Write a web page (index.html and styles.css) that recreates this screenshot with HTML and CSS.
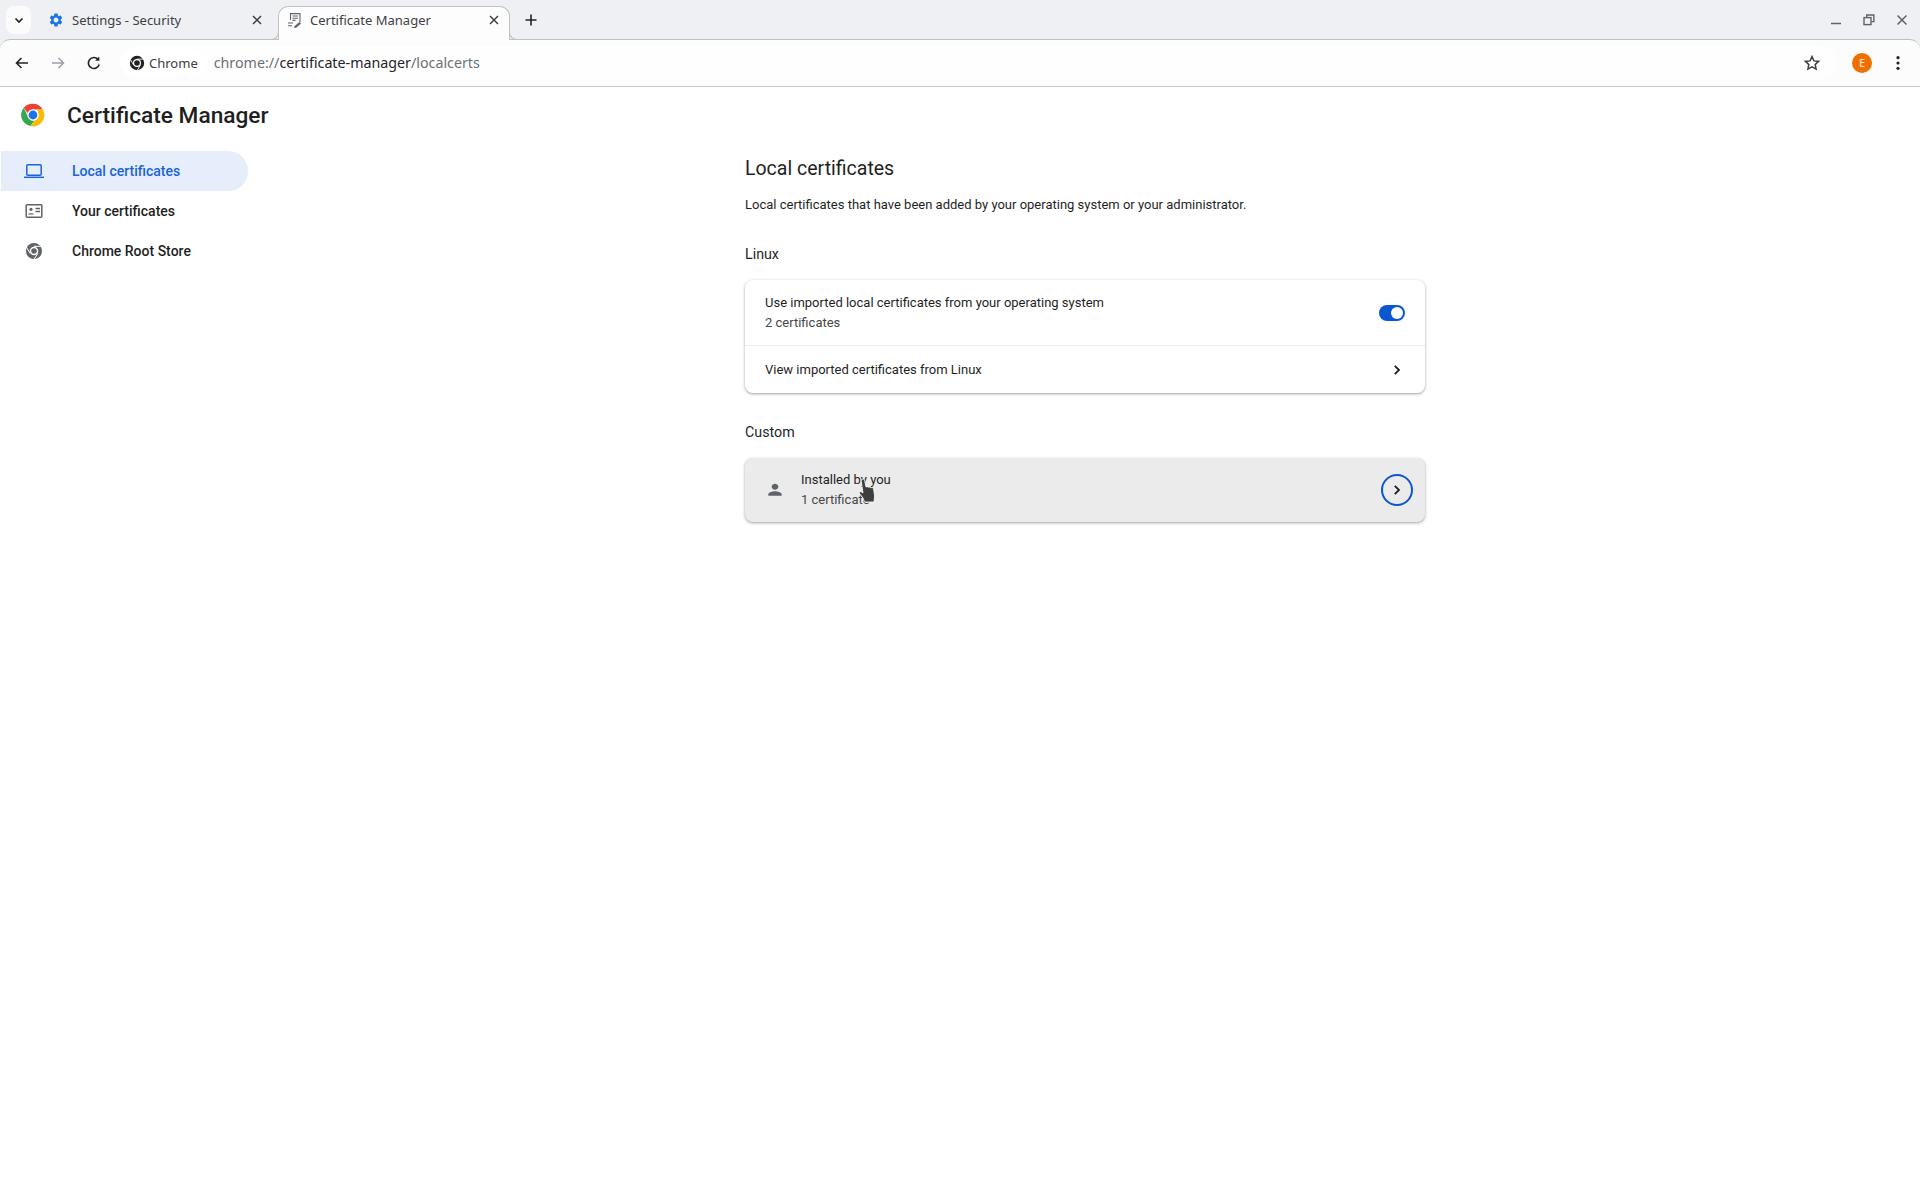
FILE: index.html
```html
<!DOCTYPE html>
<html lang="en">
<head>
<meta charset="utf-8">
<title>Certificate Manager</title>
<link rel="stylesheet" href="styles.css">
</head>
<body>
<div class="browser">
  <div class="tabstrip">
    <button class="tabsearch"><svg width="12" height="12" viewBox="0 0 12 12"><path d="M2.5 4.5 6 8l3.5-3.5" fill="none" stroke="#1f2328" stroke-width="1.7"/></svg></button>
    <div class="tab">
      <svg class="tabicon" width="16" height="16" viewBox="0 0 24 24"><path fill="#1a73e8" d="M19.14 12.94c.04-.3.06-.61.06-.94 0-.32-.02-.64-.07-.94l2.03-1.58c.18-.14.23-.41.12-.61l-1.92-3.32c-.12-.22-.37-.29-.59-.22l-2.39.96c-.5-.38-1.03-.7-1.62-.94l-.36-2.54c-.04-.24-.24-.41-.48-.41h-3.84c-.24 0-.43.17-.47.41l-.36 2.54c-.59.24-1.13.57-1.62.94l-2.39-.96c-.22-.08-.47 0-.59.22L2.74 8.87c-.12.21-.08.47.12.61l2.03 1.58c-.05.3-.09.63-.09.94s.02.64.07.94l-2.03 1.58c-.18.14-.23.41-.12.61l1.92 3.32c.12.22.37.29.59.22l2.39-.96c.5.38 1.03.7 1.62.94l.36 2.54c.05.24.24.41.48.41h3.84c.24 0 .44-.17.47-.41l.36-2.54c.59-.24 1.13-.56 1.62-.94l2.39.96c.22.08.47 0 .59-.22l1.92-3.32c.12-.22.07-.47-.12-.61l-2.01-1.58zM12 15.6c-1.98 0-3.6-1.62-3.6-3.6s1.62-3.6 3.6-3.6 3.6 1.62 3.6 3.6-1.62 3.6-3.6 3.6z"/></svg>
      <span class="tabtitle">Settings - Security</span>
      <svg class="tabclose" width="16" height="16" viewBox="0 0 16 16"><path d="m4 4 8 8M12 4l-8 8" stroke="#3c4043" stroke-width="1.5" fill="none"/></svg>
    </div>
    <div class="tab tab-active">
      <svg class="tabicon" width="16" height="16" viewBox="0 0 16 16" fill="none" stroke="#5f6368" stroke-width="1.1"><path d="M3.500 8V1.600h9.500v8.500"/><path d="M5.500 4h5.500M5.500 6.200h5.500M5.500 8.400h3"/><path d="M1 11h5M1 13.800h4"/><path d="m7.500 14.500 5-4.300 1.300 1.300-4.800 4H7.500z" fill="#5f6368" stroke-width=".6"/></svg>
      <span class="tabtitle">Certificate Manager</span>
      <svg class="tabclose" width="16" height="16" viewBox="0 0 16 16"><path d="m4 4 8 8M12 4l-8 8" stroke="#3c4043" stroke-width="1.5" fill="none"/></svg>
    </div>
    <button class="newtab"><svg width="14" height="14" viewBox="0 0 14 14"><path d="M7 1.500v11M1.500 7h11" stroke="#1f2328" stroke-width="1.600"/></svg></button>
    <div class="winctrl">
      <svg width="12" height="12" viewBox="0 0 12 12"><path d="M1 9.500h10" stroke="#5f6368" stroke-width="1.500"/></svg>
      <svg width="12" height="12" viewBox="0 0 12 12" fill="none" stroke="#5f6368" stroke-width="1.400"><path d="M3.700 3V1h7.200v6.600H8.500"/><rect x="1" y="3.600" width="7" height="7"/></svg>
      <svg width="12" height="12" viewBox="0 0 12 12"><path d="m1.500 1.500 9 9M10.500 1.500l-9 9" stroke="#5f6368" stroke-width="1.500"/></svg>
    </div>
  </div>

  <div class="toolbar">
    <svg class="navbtn" width="16" height="16" viewBox="0 0 16 16" fill="none" stroke="#1f2328" stroke-width="1.600"><path d="M14 8H2.500M7.500 3 2.500 8l5 5"/></svg>
    <svg class="navbtn" width="16" height="16" viewBox="0 0 16 16" fill="none" stroke="#9aa0a6" stroke-width="1.500"><path d="M2 8h11.500M8.500 3l5 5-5 5"/></svg>
    <svg class="navbtn" width="16" height="16" viewBox="0 0 16 16" fill="none" stroke="#1f2328" stroke-width="1.600"><path d="M13.200 9.500A5.500 5.500 0 1 1 12 4.300"/><path d="M13.300 1.500v4.200H9.100z" fill="#1f2328" stroke="none"/></svg>
    <div class="omnibox">
      <div class="chip">
        <svg width="16" height="16" viewBox="0 0 16 16"><circle cx="8" cy="8" r="7.200" fill="#202124"/><circle cx="8" cy="8" r="4" fill="#fff"/><circle cx="8" cy="8" r="2.800" fill="#202124"/><path d="M8 4.100h6.500M4.600 10 1.400 4.300M11.400 10l-3.300 5.600" stroke="#fff" stroke-width=".9"/></svg>
        <span>Chrome</span>
      </div>
      <div class="url">chrome://<b>certificate-manager</b>/localcerts</div>
      <svg class="star" width="18" height="18" viewBox="0 0 24 24" fill="none" stroke="#3c4043" stroke-width="2"><path d="m12 3.500 2.600 5.700 6.200.7-4.600 4.200 1.300 6.100-5.500-3.100-5.500 3.100 1.300-6.100-4.600-4.200 6.200-.7z"/></svg>
    </div>
    <div class="avatar">E</div>
    <svg class="dots" width="16" height="16" viewBox="0 0 16 16"><circle cx="8" cy="2.700" r="1.600" fill="#1f2328"/><circle cx="8" cy="8" r="1.600" fill="#1f2328"/><circle cx="8" cy="13.300" r="1.600" fill="#1f2328"/></svg>
  </div>

  <div class="page">
    <header class="pagehead">
      <svg width="24" height="24" viewBox="0 0 48 48">
        <path fill="#ea4335" d="M24 1.500a22.500 22.500 0 0 1 19.500 11.250H24a11.250 11.250 0 0 0-10.700 7.800L5.500 9.400A22.500 22.500 0 0 1 24 1.500z"/>
        <path fill="#34a853" d="M5.500 9.400 14.700 29.600a11.250 11.250 0 0 0 12.900 5.300L18.800 46A22.500 22.500 0 0 1 5.500 9.400z"/>
        <path fill="#fbbc04" d="M43.500 12.750A22.500 22.500 0 0 1 18.800 46l9-11.500a11.250 11.250 0 0 0 5.900-16.100 11 11 0 0 0-1.700-5.650z"/>
        <circle cx="24" cy="24" r="11" fill="#fff"/><circle cx="24" cy="24" r="8.800" fill="#1a73e8"/>
      </svg>
      <h1>Certificate Manager</h1>
    </header>
    <div class="layout">
      <nav class="sidebar">
        <a class="navitem navitem-active">
          <svg width="20" height="20" viewBox="0 0 20 20" fill="none" stroke="#1b64d8" stroke-width="1.500"><rect x="2.800" y="3.800" width="14.400" height="10.400" rx="1"/><path d="M0 16.300h20"/></svg>
          <span>Local certificates</span>
        </a>
        <a class="navitem">
          <svg width="20" height="20" viewBox="0 0 20 20"><rect x="2.200" y="3.800" width="15.600" height="12.400" rx="1" fill="none" stroke="#5f6368" stroke-width="1.500"/><circle cx="7" cy="8.300" r="1.600" fill="#5f6368"/><path d="M4 13.500c0-1.800 6-1.800 6 0z" fill="#5f6368"/><path d="M11.500 7.500H16M11.500 10.500H16" stroke="#5f6368" stroke-width="1.300"/></svg>
          <span>Your certificates</span>
        </a>
        <a class="navitem">
          <svg width="20" height="20" viewBox="0 0 20 20"><circle cx="10" cy="10" r="8" fill="#5f6368"/><circle cx="10" cy="10" r="4.300" fill="#fff"/><circle cx="10" cy="10" r="2.800" fill="#5f6368"/><path d="M10 5.300h7.500M6.100 12.300 2.300 6M13.900 12.300 10 18.500" stroke="#fff" stroke-width="1"/></svg>
          <span>Chrome Root Store</span>
        </a>
      </nav>
      <main class="content">
        <h2>Local certificates</h2>
        <p class="desc">Local certificates that have been added by your operating system or your administrator.</p>
        <h3>Linux</h3>
        <section class="card">
          <div class="row row-tall">
            <div class="rowtext">
              <div class="primary">Use imported local certificates from your operating system</div>
              <div class="secondary">2 certificates</div>
            </div>
            <div class="toggle"><span class="knob"></span></div>
          </div>
          <div class="row row-link">
            <div class="primary">View imported certificates from Linux</div>
            <svg class="chev" width="20" height="20" viewBox="0 0 20 20"><path d="m7.800 5.800 4.200 4.200-4.200 4.200" fill="none" stroke="#1f1f1f" stroke-width="1.800"/></svg>
          </div>
        </section>
        <h3 class="custom">Custom</h3>
        <section class="card card-hover">
          <div class="row row-tall row-custom">
            <svg class="person" width="20" height="20" viewBox="0 0 24 24"><path fill="#5f6368" d="M12 12c2.210 0 4-1.790 4-4s-1.790-4-4-4-4 1.790-4 4 1.790 4 4 4zm0 2c-2.670 0-8 1.340-8 4v2h16v-2c0-2.660-5.330-4-8-4z" transform="translate(0 1) scale(1 .9)"/></svg>
            <div class="rowtext">
              <div class="primary">Installed by you</div>
              <div class="secondary">1 certificate</div>
            </div>
            <div class="ringbtn"><svg width="20" height="20" viewBox="0 0 20 20"><path d="m7.800 5.800 4.200 4.200-4.200 4.200" fill="none" stroke="#1f1f1f" stroke-width="1.800"/></svg></div>
          </div>
          <svg class="cursor" width="20" height="26" viewBox="0 0 20 26"><path d="M4 1.500c1-.8 2.300-.3 2.600 1L8 9l1-.3c.6-.2 1.200.1 1.500.5l.8-.2c.7-.2 1.300.2 1.500.7l.9-.1c1-.1 1.700.5 1.900 1.400l1 7-.6 6H6.500L5 20 1.500 15.500c-.6-1 .5-2.500 2-1.500L5 15 3.300 3.500c-.1-.8.2-1.500.7-2z" fill="#3c3f3e" stroke="#fff" stroke-width=".8"/></svg>
        </section>
      </main>
    </div>
  </div>
</div>
</body>
</html>
```

FILE: styles.css
```css
* { box-sizing: border-box; }
html, body { margin: 0; padding: 0; height: 100%; background: #fff; }
body { font-family: Roboto, "Liberation Sans", sans-serif; color: #1f1f1f; overflow: hidden; }
h1, h2, h3, p { margin: 0; }
button { border: 0; padding: 0; background: none; display: flex; align-items: center; justify-content: center; }

.browser { display: flex; flex-direction: column; height: 100%; background: #eef0f3; }

.tabstrip { display: flex; align-items: flex-start; height: 39px; padding: 6px 0 0 6px; background: #eef0f3; flex: none; font-family: "Noto Sans", sans-serif; font-size: 13px; color: #3c4043; position: relative; z-index: 1; }
.tabsearch { width: 25px; height: 28px; background: #fbfbfc; border-radius: 8px; flex: none; }
.tab { display: flex; align-items: center; flex: none; position: relative; height: 34px; width: 232px; margin-left: 10px; padding: 0 8px 6px 7px; }
.tab .tabicon { margin-right: 8px; flex: none; }
.tabtitle { flex: 1; white-space: nowrap; }
.tab-active { background: #fdfdfe; border: 1px solid #bdc1c6; border-bottom: 0; border-radius: 10px 10px 0 0; width: 232px; margin-left: 5px; padding: 0 7px 7px 8px; color: #3c4043; }
.tab-active .tabicon { margin-right: 7px; }
.tab-active::before, .tab-active::after { content: ""; position: absolute; bottom: 0; width: 8px; height: 8px; border-bottom: 1px solid #bdc1c6; background: #eef0f3; }
.tab-active::before { left: -9px; border-right: 1px solid #bdc1c6; border-bottom-right-radius: 8px; }
.tab-active::after { right: -9px; border-left: 1px solid #bdc1c6; border-bottom-left-radius: 8px; }
.newtab { width: 14px; height: 14px; margin: 7px 0 0 14px; flex: none; }
.winctrl { display: flex; gap: 21px; margin: 8px 12px 0 auto; align-items: center; }
.winctrl svg { display: block; }

.toolbar { display: flex; align-items: center; height: 48px; flex: none; background: #fcfcfd; border-top: 1px solid #bdc1c6; border-bottom: 1px solid #c3c6cb; border-radius: 10px 10px 0 0; padding: 0 14px; position: relative; }
.navbtn { flex: none; margin-right: 20px; }
.omnibox { display: flex; align-items: center; flex: 1; height: 34px; margin-bottom: 1px; background: #fefefe; border-radius: 17px; font-family: "Noto Sans", sans-serif; font-size: 13px; color: #3c4043; padding-right: 16px; margin-right: 15px; }
.chip { display: flex; align-items: center; gap: 4px; height: 26px; padding: 0 8px 0 9px; background: #fff; border-radius: 13px; margin-left: -2px; }
.url { margin-left: 8px; font-size: 14.25px; color: #6b7075; flex: 1; }
.url b { font-weight: 400; color: #1f2328; }
.star { flex: none; }
.avatar { width: 20px; height: 20px; border-radius: 50%; background: #f06f00; color: #fde4cf; font: 500 11px/20px "Noto Sans", sans-serif; text-align: center; flex: none; margin-right: 18px; }
.dots { flex: none; }

.page { flex: 1; position: relative; background: #fff; }
.pagehead { display: flex; align-items: center; height: 56px; padding-left: 21px; gap: 22px; }
.pagehead h1 { font-size: 22.7px; font-weight: 500; color: #1f1f1f; }
.layout { display: flex; padding-top: 2px; }
.sidebar { width: 247px; margin-left: 1px; margin-top: 6px; flex: none; }
.navitem { display: flex; align-items: center; height: 40px; padding-left: 23px; gap: 28px; font-size: 14px; font-weight: 500; color: #1f1f1f; border-radius: 0 20px 20px 0; }
.navitem svg { flex: none; }
.navitem-active { background: #e6eefb; color: #1b64d8; }

.content { width: 680px; margin-left: 497px; }
.content h2 { font-size: 19.5px; font-weight: 400; line-height: 26px; color: #1f1f1f; margin-top: 11px; }
.desc { font-size: 13px; line-height: 20px; margin-top: 13px; color: #1f1f1f; }
.content h3 { font-size: 14.25px; font-weight: 400; line-height: 20px; margin-top: 29px; color: #1f1f1f; }
.content h3.custom { margin-top: 29px; }
.card { background: #fff; border-radius: 8px; margin-top: 16px; box-shadow: 0 1px 2px rgba(60,64,67,.3), 0 1px 3px 1px rgba(60,64,67,.15); position: relative; }
.row { display: flex; align-items: center; justify-content: space-between; padding: 0 20px; }
.row-tall { height: 65px; }
.row-link { height: 48px; border-top: 1px solid #ebebeb; }
.primary { font-size: 13px; line-height: 20px; color: #1f1f1f; }
.secondary { font-size: 13px; line-height: 20px; color: #474747; }
.toggle { width: 26px; height: 16px; border-radius: 8px; background: #0b57d0; position: relative; flex: none; }
.knob { position: absolute; right: 2px; top: 2px; width: 12px; height: 12px; border-radius: 50%; background: #fff; }
.chev { flex: none; margin-right: -2px; }
.card-hover { background: #ebebeb; }
.row-custom { height: 64px; justify-content: flex-start; padding: 0 12px 0 20px; }
.person { flex: none; margin-right: 16px; }
.row-custom .rowtext { flex: 1; }
.ringbtn { width: 32px; height: 32px; border: 2px solid #0b57d0; border-radius: 50%; display: flex; align-items: center; justify-content: center; flex: none; }
.cursor { position: absolute; left: 113px; top: 20px; }
```
